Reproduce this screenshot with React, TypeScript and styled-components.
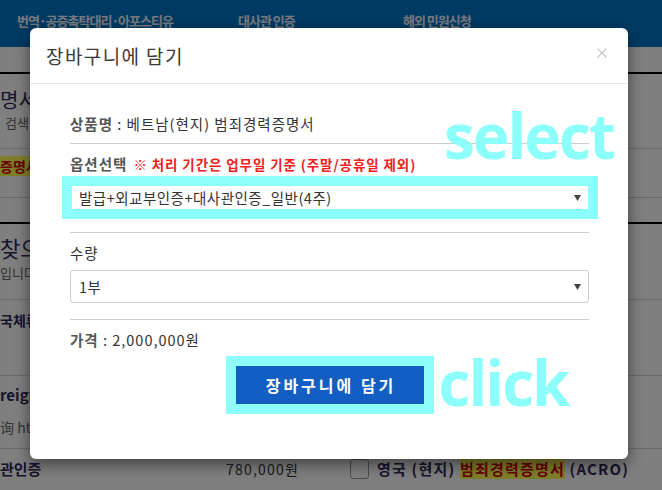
import styled, { createGlobalStyle } from "styled-components";

const GlobalStyle = createGlobalStyle`
  html, body {
    margin: 0;
    padding: 0;
  }
  body {
    width: 662px;
    height: 490px;
    overflow: hidden;
    background: #fff;
    font-family: "Noto Sans CJK KR", "Noto Sans", sans-serif;
  }
`;

const Page = styled.div`
  position: relative;
  width: 662px;
  height: 490px;
  overflow: hidden;
  background: #fff;
`;

const TopNav = styled.div`
  height: 47px;
  box-sizing: border-box;
  background: #0074c6;
  display: grid;
  grid-template-columns: 221px 165px auto;
  padding: 11px 0 0 17px;
`;

const NavItem = styled.div`
  color: #eef4ff;
  font-weight: 700;
  font-size: 13px;
  line-height: 20px;
  letter-spacing: -1px;
  white-space: nowrap;
`;

const Band = styled.div<{ $h: number; $line?: string; $lw?: number; $pt?: number }>`
  height: ${(p) => p.$h}px;
  box-sizing: border-box;
  border-bottom: ${(p) => p.$lw ?? 1}px solid ${(p) => p.$line ?? "#d4d4d4"};
  padding-top: ${(p) => p.$pt ?? 0}px;
  display: flex;
  flex-direction: column;
  white-space: nowrap;
`;

const BigText = styled.div<{ $size?: number }>`
  font-size: ${(p) => p.$size ?? 20}px;
  line-height: ${(p) => (p.$size ?? 20) + 4}px;
  color: #32285a;
`;

const SmallGray = styled.div<{ $mt?: number; $ml?: number; $size?: number }>`
  font-size: ${(p) => p.$size ?? 13}px;
  line-height: 18px;
  color: #666;
  margin-top: ${(p) => p.$mt ?? 0}px;
  margin-left: ${(p) => p.$ml ?? 0}px;
`;

const BoldText = styled.div<{ $size?: number }>`
  font-size: ${(p) => p.$size ?? 14}px;
  line-height: 18px;
  font-weight: 700;
  color: #32285a;
`;

const Mark = styled.span`
  background: #ffff55;
  color: #d00000;
  font-weight: 700;
`;

const ProductRow = styled.div`
  display: grid;
  grid-template-columns: 226px 124px 27px auto;
  align-items: center;
  line-height: 20px;
  white-space: nowrap;
`;

const Price = styled.div`
  font-size: 14px;
  color: #333;
  letter-spacing: 1.2px;
`;

const CheckBox = styled.span`
  display: block;
  width: 17px;
  height: 18px;
  border: 1px solid #999;
  border-radius: 3px;
  background: #fff;
`;

const ProductName = styled.div`
  font-size: 15px;
  font-weight: 700;
  color: #32285a;
  letter-spacing: 1.2px;
`;

const Backdrop = styled.div`
  position: absolute;
  inset: 0;
  background: rgba(0, 0, 0, 0.5);
`;

const Dialog = styled.div`
  position: absolute;
  top: 28px;
  left: 30px;
  width: 598px;
  background: #fff;
  border-radius: 6px;
  box-shadow: 0 5px 15px rgba(0, 0, 0, 0.5);
`;

const Header = styled.div`
  height: 55px;
  border-bottom: 1px solid #e5e5e5;
  display: flex;
  justify-content: space-between;
  padding: 0 21px 0 16px;
`;

const Title = styled.h4`
  margin: 0;
  font-size: 19px;
  line-height: 55px;
  font-weight: 400;
  color: #3a3a3a;
  letter-spacing: 1.4px;
`;

const Close = styled.button`
  border: 0;
  background: none;
  padding: 0;
  margin-top: 20px;
  width: 10px;
  height: 10px;
  display: flex;
  cursor: pointer;
`;

const Body = styled.div`
  padding: 20px 39px 45px 40px;
`;

const Section = styled.div<{ $pb: number }>`
  padding: 10px 0 ${(p) => p.$pb}px;
  border-bottom: 1px solid #ccc;
`;

const Line = styled.div<{ $mb?: number }>`
  font-size: 14.5px;
  line-height: 20px;
  color: #333;
  letter-spacing: 1px;
  margin-bottom: ${(p) => p.$mb ?? 0}px;
  white-space: nowrap;
`;

const Label = styled.span<{ $bold?: boolean }>`
  font-weight: ${(p) => (p.$bold ? 700 : 400)};
  color: ${(p) => (p.$bold ? "#555" : "#333")};
`;

const Note = styled.span`
  margin-left: 6px;
  font-size: 13.5px;
  font-weight: 700;
  color: #f0201c;
  letter-spacing: 0.9px;
`;

const SelectWrap = styled.div`
  position: relative;
`;

const SelectBox = styled.div`
  height: 33px;
  box-sizing: border-box;
  border: 1px solid #ccc;
  border-radius: 3px;
  display: flex;
  align-items: center;
  justify-content: space-between;
  padding: 0 7px 0 8px;
  font-size: 14.5px;
  letter-spacing: 0.5px;
  color: #333;
  background: #fff;
`;

const HighlightFrame = styled.div`
  position: absolute;
  top: -5px;
  bottom: -5px;
  left: -8px;
  right: -9px;
  border: 10px solid #8dfffa;
  pointer-events: none;
`;

const ButtonRow = styled.div`
  display: flex;
  justify-content: center;
  margin-top: 6px;
`;

const ButtonFrame = styled.div`
  position: relative;
  padding: 10px;
  background: #8dfffa;
`;

const CartButton = styled.button`
  display: block;
  width: 188px;
  height: 38px;
  border: 0;
  padding: 0 0 0 3px;
  background: #135ec2;
  color: #fff;
  font-family: "Noto Sans CJK KR", sans-serif;
  font-size: 16px;
  font-weight: 700;
  letter-spacing: 3px;
  cursor: pointer;
`;

const Annotation = styled.div<{ $top: number; $left: string }>`
  position: absolute;
  top: ${(p) => p.$top}px;
  left: ${(p) => p.$left};
  font-family: "Open Sans", sans-serif;
  font-size: 62px;
  line-height: 1;
  font-weight: 700;
  letter-spacing: -2px;
  color: #8dfffa;
  white-space: nowrap;
  pointer-events: none;
`;

const Arrow = () => (
  <svg width="7" height="6" viewBox="0 0 7 6">
    <path d="M0 0h7L3.5 6z" fill="#444" />
  </svg>
);

export default function App() {
  return (
    <>
      <GlobalStyle />
      <Page>
        <TopNav>
          <NavItem>번역·공증촉탁대리·아포스티유</NavItem>
          <NavItem>대사관 인증</NavItem>
          <NavItem>해외 민원신청</NavItem>
        </TopNav>
        <Band $h={27} $line="#000" $lw={2} />
        <Band $h={75} $pt={14}>
          <BigText>명서</BigText>
          <SmallGray $mt={2} $ml={5}>검색</SmallGray>
        </Band>
        <Band $h={49} $pt={8}>
          <BoldText>
            <Mark>증명서</Mark>
          </BoldText>
        </Band>
        <Band $h={26} $line="#000" $lw={2} />
        <Band $h={76} $pt={10}>
          <BigText $size={22}>찾으</BigText>
          <SmallGray $mt={4}>입니다</SmallGray>
        </Band>
        <Band $h={76} $pt={11}>
          <BoldText>국체류</BoldText>
        </Band>
        <Band $h={73} $pt={10}>
          <BoldText $size={15}>reign</BoldText>
          <SmallGray $mt={14} $size={14}>
            询 http
          </SmallGray>
        </Band>
        <Band $h={41} $pt={10} $line="transparent">
          <ProductRow>
            <BoldText $size={15}>관인증</BoldText>
            <Price>780,000원</Price>
            <CheckBox />
            <ProductName>
              영국 (현지) <Mark>범죄경력증명서</Mark> (ACRO)
            </ProductName>
          </ProductRow>
        </Band>
        <Backdrop />
        <Dialog>
          <Header>
            <Title>장바구니에 담기</Title>
            <Close aria-label="닫기">
              <svg width="10" height="10" viewBox="0 0 10 10">
                <path d="M0.5 0.5L9.5 9.5M9.5 0.5L0.5 9.5" stroke="#c8c8c8" strokeWidth="1.2" />
              </svg>
            </Close>
          </Header>
          <Body>
            <Section $pb={9}>
              <Line>
                <Label $bold>상품명</Label> : 베트남(현지) 범죄경력증명서
              </Line>
            </Section>
            <Section $pb={18}>
              <Line $mb={7}>
                <Label $bold>옵션선택</Label>
                <Note>※ 처리 기간은 업무일 기준 (주말/공휴일 제외)</Note>
              </Line>
              <SelectWrap>
                <SelectBox>
                  <span>발급+외교부인증+대사관인증_일반(4주)</span>
                  <Arrow />
                </SelectBox>
                <HighlightFrame />
              </SelectWrap>
            </Section>
            <Section $pb={16}>
              <Line $mb={7}>
                <Label>수량</Label>
              </Line>
              <SelectBox>
                <span>1부</span>
                <Arrow />
              </SelectBox>
            </Section>
            <Line style={{ marginTop: 10 }}>
              <Label $bold>가격</Label> : 2,000,000원
            </Line>
            <ButtonRow>
              <ButtonFrame>
                <CartButton>장바구니에 담기</CartButton>
                <Annotation $top={-5} $left="calc(100% + 5px)">click</Annotation>
              </ButtonFrame>
            </ButtonRow>
          </Body>
          <Annotation $top={76} $left="414px">select</Annotation>
        </Dialog>
      </Page>
    </>
  );
}
